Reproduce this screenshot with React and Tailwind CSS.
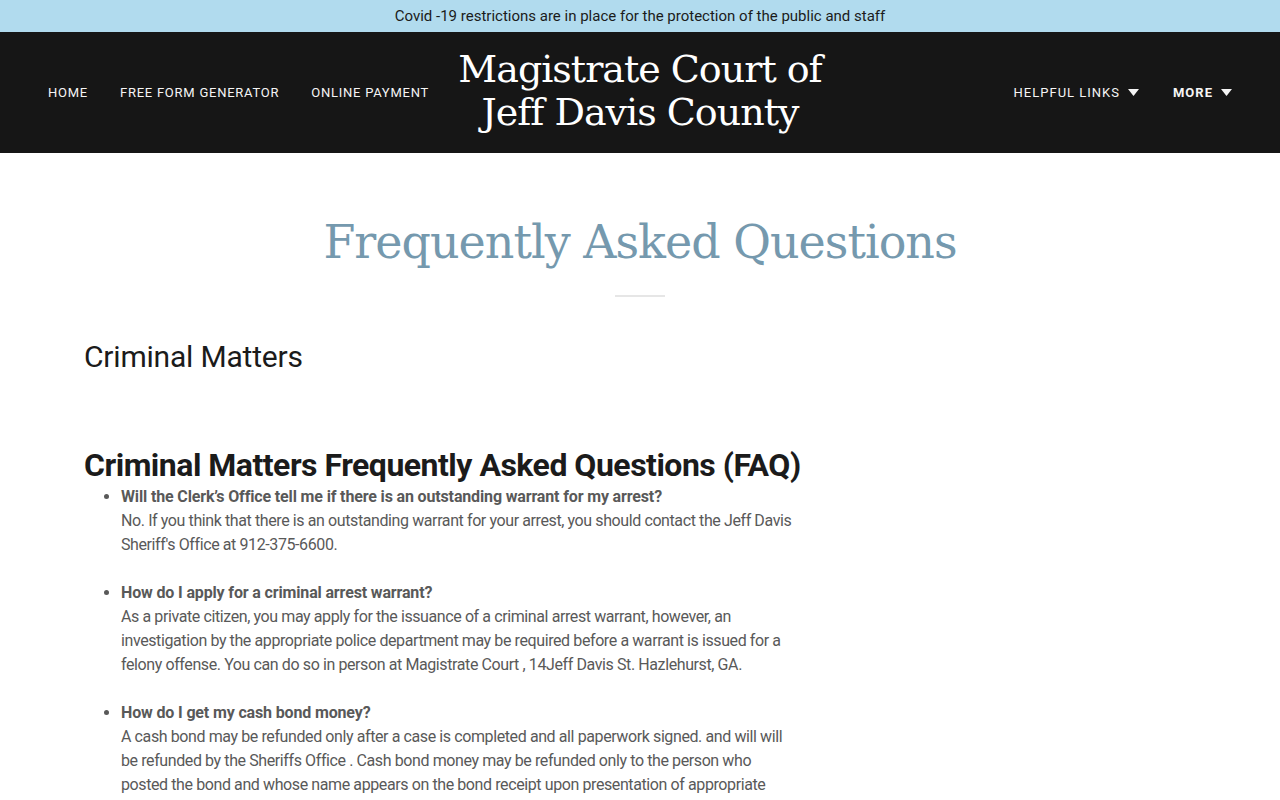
const sans = { fontFamily: 'Roboto, "Open Sans", sans-serif' };
const serif = { fontFamily: '"DejaVu Serif", "Liberation Serif", serif' };

const Caret = () => (
  <svg width="11" height="7" viewBox="0 0 11 7" className="ml-2 inline-block">
    <path d="M0 0h11L5.5 7z" fill="currentColor" />
  </svg>
);

const faqs = [
  {
    q: 'Will the Clerk’s Office tell me if there is an outstanding warrant for my arrest?',
    a: [
      'No. If you think that there is an outstanding warrant for your arrest, you should contact the Jeff Davis',
      "Sheriff's Office at 912-375-6600.",
    ],
  },
  {
    q: 'How do I apply for a criminal arrest warrant?',
    a: [
      'As a private citizen, you may apply for the issuance of a criminal arrest warrant, however, an',
      'investigation by the appropriate police department may be required before a warrant is issued for a',
      'felony offense. You can do so in person at Magistrate Court , 14Jeff Davis St. Hazlehurst, GA.',
    ],
  },
  {
    q: 'How do I get my cash bond money?',
    a: [
      'A cash bond may be refunded only after a case is completed and all paperwork signed. and will will',
      'be refunded by the Sheriffs Office . Cash bond money may be refunded only to the person who',
      'posted the bond and whose name appears on the bond receipt upon presentation of appropriate',
      'identification.',
    ],
  },
];

export default function App() {
  return (
    <div className="min-h-screen bg-white" style={sans}>
      <div className="h-8 bg-[#b1dbee] flex items-center justify-center text-[15px] text-[#1b1b1b]">
        Covid -19 restrictions are in place for the protection of the public and staff
      </div>

      <header className="h-[121px] bg-[#161616] flex items-center justify-between px-12 text-[#f5f5f5]">
        <nav className="flex items-center gap-8 text-[13px] tracking-[0.75px] uppercase w-[400px]">
          <span>Home</span>
          <span>Free Form Generator</span>
          <span>Online Payment</span>
        </nav>
        <h1
          className="text-center text-[38px] leading-[43px] tracking-[-1px] text-white whitespace-nowrap pb-1"
          style={serif}
        >
          Magistrate Court of
          <br />
          Jeff Davis County
        </h1>
        <nav className="flex items-center justify-end gap-[34px] text-[13px] tracking-[1px] uppercase w-[400px]">
          <span className="flex items-center">Helpful Links<Caret /></span>
          <span className="flex items-center font-bold">More<Caret /></span>
        </nav>
      </header>

      <main className="px-[84px]">
        <h2
          className="text-center text-[46px] tracking-[-1px] text-[#7599ae] pt-[54px] leading-[70px]"
          style={serif}
        >
          Frequently Asked Questions
        </h2>
        <div className="mx-auto mt-[18px] w-[50px] h-[2px] bg-[#e6e6e6]" />

        <h3 className="mt-[40px] text-[30px] text-[#1b1b1b] leading-[40px] tracking-[-0.2px]">
          Criminal Matters
        </h3>

        <h4 className="mt-[68px] text-[32px] font-bold text-[#1b1b1b] leading-[40px] tracking-[-0.5px]">
          Criminal Matters Frequently Asked Questions (FAQ)
        </h4>

        <ul className="list-disc pl-[37px] text-[16px] leading-[24px] text-[#595959] marker:text-[#595959]">
          {faqs.map((f, i) => (
            <li key={i} className="mb-6">
              <div className="font-bold tracking-[-0.15px] whitespace-nowrap">{f.q}</div>
              {f.a.map((l, j) => (
                <div key={j} className="whitespace-nowrap tracking-[-0.4px]">{l}</div>
              ))}
            </li>
          ))}
        </ul>
      </main>
    </div>
  );
}
